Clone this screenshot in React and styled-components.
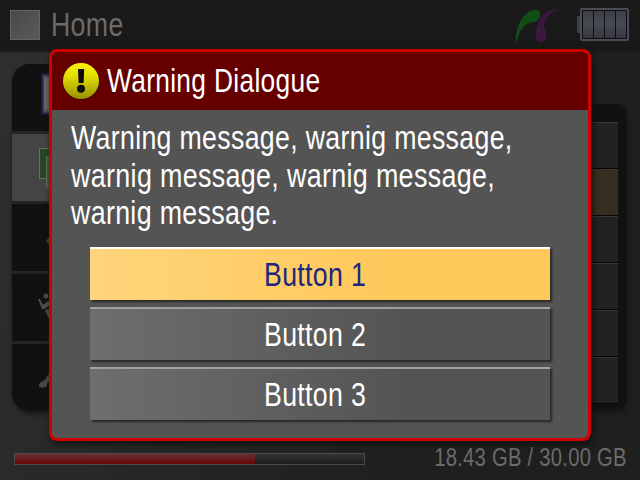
import React from "react";
import styled, { createGlobalStyle, css } from "styled-components";

const Global = createGlobalStyle`
  body { margin: 0; background: #1e1e1e; }
  * { box-sizing: border-box; }
`;

const Screen = styled.div`
  position: relative;
  display: flex;
  flex-direction: column;
  width: 640px;
  height: 480px;
  overflow: hidden;
  font-family: "Liberation Sans", Arial, sans-serif;
  background: linear-gradient(115deg, #303030 0%, #282828 35%, #1f1f1f 72%, #1f1f1f 100%);
`;

const Condensed = styled.span`
  display: block;
  white-space: nowrap;
  letter-spacing: 0.012em;
  transform: scaleX(${(p) => p.$x || 0.81});
  transform-origin: ${(p) => p.$from || "left"} center;
`;

const TopBar = styled.header`
  display: flex;
  align-items: center;
  flex: none;
  height: 51px;
  padding: 0 11px 2px 10px;
  background: linear-gradient(#1b1b1b, #181818);
  box-shadow: 0 1px 2px #1c1c1c;
`;

const HomeTile = styled.div`
  width: 30px;
  height: 30px;
  margin-right: 11px;
  border: 1px solid #646464;
  background: linear-gradient(135deg, #484848, #5b5b5b);
`;

const ScreenTitle = styled.h1`
  flex: 1;
  margin: 0;
  font-size: 33px;
  font-weight: 400;
  line-height: 49px;
  color: #6b6b6b;
`;

const BridgeLogo = styled.svg`
  width: 48px;
  height: 40px;
  margin: 3px 17px 0 0;
`;

const Battery = styled.svg`
  width: 52px;
  height: 34px;
`;

const Workspace = styled.main`
  display: flex;
  justify-content: space-between;
  flex: 1;
  padding: 13px 14px 0 12px;
`;

const Menu = styled.nav`
  display: flex;
  flex-direction: column;
  gap: 3px;
  width: 100px;
  height: 347px;
  overflow: hidden;
  border-radius: 18px;
  background: #242424;
  box-shadow: 1px 3px 4px #191919;
`;

const MenuRow = styled.div`
  flex: 1;
  background: ${(p) => (p.$selected ? "#444" : "#111")};
`;

const MenuIcon = styled.svg`
  display: block;
  width: 70px;
  height: 67px;
`;

const OptionPanel = styled.aside`
  width: 120px;
  height: 305px;
  margin-top: 40px;
  padding: 18px 8px 0 0;
  border-radius: 8px;
  background: #111;
  box-shadow: 1px 3px 5px #151515;
`;

const Option = styled.div`
  height: 47px;
  border-top: 1px solid #373737;
  border-bottom: 1px solid #050505;
  background: #222;
  ${(p) =>
    p.$selected &&
    css`
      border-top-color: #3b352b;
      background: linear-gradient(90deg, #38301f 68%, #352e20);
    `}
`;

const StatusBar = styled.footer`
  display: flex;
  align-items: center;
  justify-content: space-between;
  flex: none;
  height: 45px;
  padding: 0 13px 0 14px;
`;

const Meter = styled.div`
  width: 351px;
  height: 12px;
  margin-top: 3px;
  border: 1px solid #4a4a4a;
  background: linear-gradient(#333, #1c1c1c);
`;

const MeterFill = styled.div`
  width: 240px;
  height: 100%;
  background: linear-gradient(#663035, #6a1b20 50%, #620408);
`;

const Storage = styled.div`
  font-size: 25px;
  line-height: 45px;
  color: #6b6b6b;
`;

const Dialog = styled.section`
  position: absolute;
  top: 49px;
  left: 49px;
  width: 542px;
  height: 392px;
  overflow: hidden;
  border: 3px solid #d00000;
  border-radius: 8px;
  color: #fff;
  font-size: 33px;
  background: #545454;
  box-shadow: 2px 3px 6px #111;
`;

const DialogHeader = styled.header`
  display: flex;
  align-items: center;
  height: 58px;
  padding-left: 10px;
  background: #660000;
`;

const WarningIcon = styled.svg`
  flex: none;
  width: 40px;
  height: 40px;
  margin-right: 5px;
`;

const DialogTitle = styled.h2`
  margin: 0;
  font-size: inherit;
  font-weight: 400;
`;

const Message = styled.div`
  height: 137px;
  padding: 9px 0 0 19px;
  line-height: 37.5px;
`;

const Actions = styled.div`
  display: flex;
  flex-direction: column;
  gap: 7px;
  padding: 0 38px;
`;

const Action = styled.button`
  display: flex;
  align-items: center;
  justify-content: center;
  height: 53px;
  padding: 0 10px 0 0;
  border: 0;
  border-top: 2px solid ${(p) => (p.$primary ? "#fff" : "#a0a0a0")};
  font: inherit;
  color: ${(p) => (p.$primary ? "#20257f" : "#fff")};
  background: ${(p) =>
    p.$primary
      ? "linear-gradient(90deg, #ffd47b, #ffc95b 65%)"
      : "linear-gradient(90deg, #6e6e6e, #545454 68%)"};
  box-shadow: 2px 2px 2px #282828;
`;

function MenuDrawing({ kind }) {
  return (
    <MenuIcon viewBox="0 0 70 67">
      {kind === "photo" && (
        <g>
          <rect x="30.5" y="10.5" width="30" height="39" fill="#555" stroke="#242455" strokeWidth="2" />
          <rect x="32" y="14" width="28" height="31" fill="#666" />
        </g>
      )}
      {kind === "album" && (
        <g fill="#254823" stroke="#637463">
          <rect x="27.5" y="14.5" width="20" height="30" />
          <rect x="34.5" y="22.5" width="20" height="30" fill="#465744" />
        </g>
      )}
      {kind === "leaf" && <path d="M34 37Q36 32 45 32V42Q37 41 34 37Z" fill="#345012" />}
      {kind === "runner" && (
        <g fill="#495052">
          <circle cx="34" cy="22" r="2.5" />
          <path d="M26 25l2 0 3 6 5-4 4-1v4l-8 5-2 0zM33 36l6-2v14l-3-5z" />
        </g>
      )}
      {kind === "phone" && (
        <path d="M27 43Q26 39 31 37Q34 36 35 32Q37 30 41 29V38Q34 37 35 42Q31 45 27 43Z" fill="#484848" />
      )}
    </MenuIcon>
  );
}

const menu = ["photo", "album", "leaf", "runner", "phone"];
const options = [false, true, false, false, false, false];
const lines = [
  ["Warning message, warnig message,", 0.81],
  ["warnig message, warnig message,", 0.815],
  ["warnig message.", 0.812],
];

export default function App() {
  return (
    <Screen>
      <Global />
      <TopBar>
        <HomeTile />
        <ScreenTitle><Condensed>Home</Condensed></ScreenTitle>
        <BridgeLogo viewBox="512 6 48 40">
          <path d="M516.500 44C515 36 517 27 521 20C525 13 532 9 538 10C542 12 541 19 536 21.500C530 22.500 525 24 522 29C518.500 33 518 38 516.500 44Z" fill="#124d17" />
          <path d="M558.500 8.500C551 9 542 14 539.500 20C537 25 537 28 536 32C535 38 536 42 541 42C546 42 547 37 546 33C545.500 28 542.500 25 545 21C547 16 553 11 558.500 8.500Z" fill="#3c1840" />
        </BridgeLogo>
        <Battery viewBox="0 0 52 34">
          <defs>
            <linearGradient id="cell" x2="0" y2="1">
              <stop stopColor="#3e3f46" />
              <stop offset=".5" stopColor="#484a52" />
              <stop offset="1" stopColor="#35363e" />
            </linearGradient>
          </defs>
          <rect y="8" width="5" height="17" rx="1.500" fill="#404249" />
          <rect x="3" width="49" height="33" rx="2" fill="#4b4d55" />
          <path d="M5 2h45v29H5z" fill="#0d0d12" />
          {[6, 17, 28, 39].map((x) => (
            <rect key={x} x={x} y="3" width="10" height="27" fill="url(#cell)" />
          ))}
        </Battery>
      </TopBar>
      <Workspace>
        <Menu>
          {menu.map((kind) => (
            <MenuRow key={kind} $selected={kind === "album"}><MenuDrawing kind={kind} /></MenuRow>
          ))}
        </Menu>
        <OptionPanel>
          {options.map((selected, i) => <Option key={i} $selected={selected} />)}
        </OptionPanel>
      </Workspace>
      <StatusBar>
        <Meter><MeterFill /></Meter>
        <Storage><Condensed $from="right">18.43 GB / 30.00 GB</Condensed></Storage>
      </StatusBar>
      <Dialog>
        <DialogHeader>
          <WarningIcon viewBox="0 0 40 40">
            <defs>
              <linearGradient id="yellow" x2="0" y2="1">
                <stop stopColor="#f8f408" />
                <stop offset=".35" stopColor="#e4df00" />
                <stop offset="1" stopColor="#969000" />
              </linearGradient>
            </defs>
            <circle cx="19.500" cy="21" r="18" fill="#340000" opacity=".7" />
            <circle cx="19" cy="20" r="18" fill="url(#yellow)" />
            <path d="M16 8h6.200l-.6 14h-5z" fill="#0c0c0c" />
            <circle cx="19" cy="27.800" r="4" fill="#0c0c0c" />
          </WarningIcon>
          <DialogTitle><Condensed $x={0.798}>Warning Dialogue</Condensed></DialogTitle>
        </DialogHeader>
        <Message>
          {lines.map(([text, x]) => <Condensed key={text} $x={x}>{text}</Condensed>)}
        </Message>
        <Actions>
          {[1, 2, 3].map((n) => (
            <Action key={n} $primary={n === 1}>
              <Condensed $from="center">Button {n}</Condensed>
            </Action>
          ))}
        </Actions>
      </Dialog>
    </Screen>
  );
}
